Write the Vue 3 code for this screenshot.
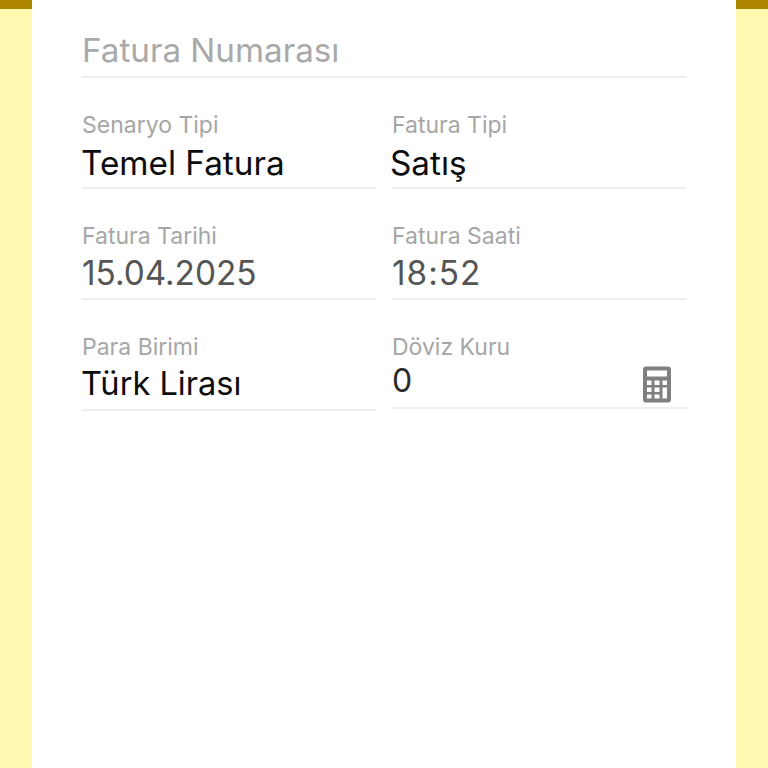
<script setup>
const rows = [
  [
    { label: 'Senaryo Tipi', value: 'Temel Fatura', tone: 'dark' },
    { label: 'Fatura Tipi', value: 'Satış', tone: 'dark', shift: true },
  ],
  [
    { label: 'Fatura Tarihi', value: '15.04.2025', tone: 'grey' },
    { label: 'Fatura Saati', value: '18:52', tone: 'grey time' },
  ],
  [
    { label: 'Para Birimi', value: 'Türk Lirası', tone: 'dark tight' },
    { label: 'Döviz Kuru', value: '0', tone: 'small', calc: true },
  ],
]
</script>

<template>
  <div class="page">
    <div class="side"><div class="cap"></div></div>
    <main class="sheet">
      <div class="title">Fatura Numarası</div>
      <div class="grid">
        <div v-for="(row, i) in rows" :key="i" class="row">
          <div v-for="f in row" :key="f.label" class="field" :class="{ 'field-calc': f.calc }">
            <div class="label">{{ f.label }}</div>
            <div class="value" :class="[f.tone, { shift: f.shift }]">
              <span>{{ f.value }}</span>
              <svg v-if="f.calc" class="calc" viewBox="0 0 28 36" width="28" height="37">
                <path fill="#808080" fill-rule="evenodd" d="M3 0h22a3 3 0 0 1 3 3v30a3 3 0 0 1-3 3H3a3 3 0 0 1-3-3V3a3 3 0 0 1 3-3zM4 4v6h20V4zM4 14v4.500h4.500V14zM11.500 14v4.500h5V14zM19.500 14v4.500H24V14zM4 21v4.500h4.500V21zM11.500 21v4.500h5V21zM19.500 21v11H24V21zM4 28v4h4.500v-4zM11.500 28v4h5v-4z"/>
              </svg>
            </div>
          </div>
        </div>
      </div>
    </main>
    <div class="side"><div class="cap"></div></div>
  </div>
</template>

<style scoped>
.page {
  display: flex;
  width: 768px;
  height: 768px;
  overflow: hidden;
  background: #fff;
  font-family: Inter, sans-serif;
}
.side {
  width: 32px;
  flex: none;
  background: #fff8b0;
}
.cap {
  height: 9px;
  background: #ad8500;
}
.sheet {
  flex: 1;
  padding: 28px 50px 0;
  background: #fff;
}
.title {
  height: 50px;
  box-sizing: border-box;
  padding-bottom: 4px;
  font-size: 33.200px;
  line-height: 44px;
  color: #a9a9a9;
  border-bottom: 2px solid #eeeeee;
  display: flex;
  align-items: center;
}
.grid {
  display: flex;
  flex-direction: column;
  gap: 31px;
  margin-top: 31px;
}
.row {
  display: grid;
  grid-template-columns: 294px 294px;
  gap: 16px;
}
.field {
  height: 80px;
  box-sizing: border-box;
  border-bottom: 2px solid #eeeeee;
}
.field-calc {
  height: 78px;
  margin-right: -1px;
}
.label {
  font-size: 23px;
  line-height: 32px;
  color: #a6a6a6;
}
.value {
  display: flex;
  align-items: center;
  justify-content: space-between;
  height: 44px;
  font-size: 33.300px;
  line-height: 44px;
}
.dark {
  color: #0c0c0c;
  margin-left: -1px;
}
.tight {
  height: 40px;
  font-size: 32.600px;
}
.grey {
  height: 42px;
  color: #555555;
}
.time {
  letter-spacing: 1px;
}
.small {
  font-size: 32px;
  height: 36px;
  color: #2a2a2a;
}
.shift {
  margin-left: -2px;
}
.calc {
  flex: none;
  margin: 6px 16px 0 0;
}
</style>
